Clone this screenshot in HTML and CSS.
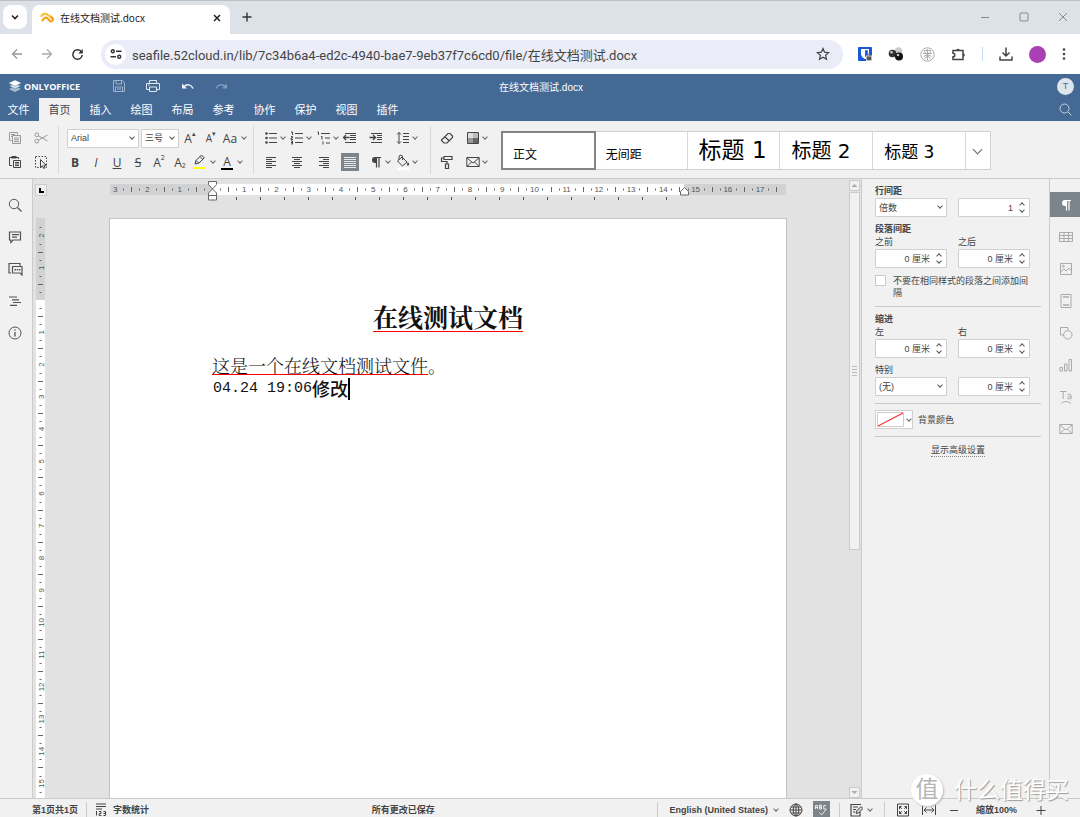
FILE: index.html
```html
<!DOCTYPE html>
<html lang="zh-CN">
<head>
<meta charset="utf-8">
<title>在线文档测试.docx</title>
<link rel="stylesheet" href="styles.css">
</head>
<body>
<div class="window">
  <div class="tabstrip">
    <button class="tab-search" aria-label="搜索标签页"><svg width="10" height="10" viewBox="0 0 10 10"><path d="M2 3.5l3 3 3-3" stroke="#222" stroke-width="1.6"/></svg></button>
    <div class="browser-tab">
      <svg width="14" height="12" viewBox="0 0 14 12"><path d="M1.500 4C3 1.500 5.500 1 8 3c1.500 1.500 2.500 1.500 3.500 1.500" stroke="#fcc13a" stroke-width="2.200" stroke-linecap="round"/><path d="M2.500 8.500C4.500 4.500 7 5 8.500 7.500c1 2 3 2.500 4 1s0-3-1.500-3.200" stroke="#f9a01b" stroke-width="2.200" stroke-linecap="round"/></svg>
      <span class="browser-tab-title">在线文档测试.docx</span>
      <button class="plain" aria-label="关闭标签页"><svg width="10" height="10" viewBox="0 0 10 10"><path d="M2 2l6 6M8 2l-6 6" stroke="#222" stroke-width="1.500"/></svg></button>
    </div>
    <button class="plain new-tab" aria-label="新标签页"><svg width="10" height="10" viewBox="0 0 10 10"><path d="M5 .5v9M.5 5h9" stroke="#333" stroke-width="1.400"/></svg></button>
    <div class="window-controls">
      <button class="plain" aria-label="最小化"><svg width="10" height="10" viewBox="0 0 10 10"><path d="M1 5.500h8" stroke="#888"/></svg></button>
      <button class="plain" aria-label="最大化"><svg width="10" height="10" viewBox="0 0 10 10"><rect x="1" y="1" width="8" height="8" rx="1" stroke="#888"/></svg></button>
      <button class="plain" aria-label="关闭"><svg width="10" height="10" viewBox="0 0 10 10"><path d="M1 1l8 8M9 1l-8 8" stroke="#888"/></svg></button>
    </div>
  </div>

  <div class="addressbar">
    <button class="plain nav" aria-label="后退"><svg width="12" height="12" viewBox="0 0 12 12"><path d="M11 6H1.500M6 1.500L1.500 6 6 10.500" stroke="#999" stroke-width="1.300"/></svg></button>
    <button class="plain nav" aria-label="前进"><svg width="12" height="12" viewBox="0 0 12 12"><path d="M1 6h9.500M6 1.500L10.500 6 6 10.500" stroke="#aaa" stroke-width="1.300"/></svg></button>
    <button class="plain nav" aria-label="刷新"><svg width="13" height="13" viewBox="0 0 13 13"><path d="M10.500 4A4.700 4.700 0 1 0 11.200 7" stroke="#333" stroke-width="1.500"/><path d="M11.800 1v4.500H7.300z" fill="#333"/></svg></button>
    <div class="omnibox">
      <span class="site-info"><svg width="12" height="12" viewBox="0 0 12 12"><g stroke="#333" stroke-width="1.400"><circle cx="2.800" cy="3.300" r="1.500"/><path d="M6 3.300h5.500M.5 8.700H6"/><circle cx="9.200" cy="8.700" r="1.500"/></g></svg></span>
      <input class="url" type="text" aria-label="地址" value="seafile.52cloud.in/lib/7c34b6a4-ed2c-4940-bae7-9eb37f7c6cd0/file/在线文档测试.docx">
      <button class="plain" aria-label="添加书签"><svg width="14" height="14" viewBox="0 0 14 14"><path d="M7 1.500l1.600 3.700 4 .4-3 2.700.9 4L7 10.200l-3.500 2.100.9-4-3-2.700 4-.4z" stroke="#444" stroke-width="1.200"/></svg></button>
    </div>
    <div class="extensions">
      <button class="plain" aria-label="Bitwarden"><svg width="14" height="14" viewBox="0 0 14 14"><rect width="14" height="14" rx="1" fill="#1859d8"/><path d="M3 2h8v5c0 3-4 5-4 5S3 10 3 7z" fill="#fff"/><path d="M7 3.200h2.800V7c0 1.600-2.800 3-2.800 3z" fill="#1859d8"/><rect x="8" y="8.500" width="6" height="5.500" fill="#dfe3ea"/><rect x="8.700" y="9.500" width="4.600" height="3.700" fill="#555"/><path d="M9.700 9.500V8.200a1.300 1.300 0 0 1 2.600 0v1.300" stroke="#666"/></svg></button>
      <button class="plain" aria-label="扩展"><svg width="16" height="14" viewBox="0 0 16 14"><circle cx="10.500" cy="4" r="3.800" fill="#ccc"/><circle cx="4.500" cy="6.500" r="3.800" fill="#333"/><circle cx="11" cy="9.500" r="4" fill="#111"/><circle cx="3.500" cy="5.300" r="1.300" fill="#ccc"/><circle cx="10" cy="8" r="1.300" fill="#ccc"/></svg></button>
      <button class="plain" aria-label="扩展"><svg width="15" height="15" viewBox="0 0 15 15"><g stroke="#aaa"><circle cx="7.500" cy="7.500" r="6.700"/><path d="M4 3.500h7M3 6.500h9M7.500 2v11M4 4.500l3.500 3 3.500-3M3.500 9.500l4-2 4 2M4.500 12l3-4 3 4"/></g></svg></button>
      <button class="plain" aria-label="扩展程序"><svg width="15" height="15" viewBox="0 0 15 15"><path d="M2 3.500h10v9H2v-2.700a1.800 1.800 0 0 0 0-3.600z" stroke="#444" stroke-width="1.500"/><path d="M5.200 3.500a1.800 1.800 0 0 1 3.600 0zM12 6.200a1.800 1.800 0 0 1 0 3.600z" fill="#444"/></svg></button>
      <span class="ext-divider"></span>
      <button class="plain" aria-label="下载"><svg width="14" height="14" viewBox="0 0 14 14"><path d="M7 .5v8.500M3.500 5.500L7 9l3.500-3.500M1 9.500v3.500h12V9.500" stroke="#444" stroke-width="1.500"/></svg></button>
      <button class="profile" aria-label="个人资料"></button>
      <button class="plain" aria-label="菜单"><svg width="4" height="14" viewBox="0 0 4 14"><g fill="#444"><circle cx="2" cy="2.500" r="1.300"/><circle cx="2" cy="7" r="1.300"/><circle cx="2" cy="11.500" r="1.300"/></g></svg></button>
    </div>
  </div>

  <header class="app-header">
    <div class="title-row">
      <div class="brand-area">
        <span class="brand"><svg width="14" height="14" viewBox="0 0 14 14"><path d="M7 7.500l6 2.600L7 13 1 10.100z" fill="#a9bdd3"/><path d="M7 4.500l6 2.600L7 10 1 7.100z" fill="#d5dfe9" stroke="#446995" stroke-width=".5"/><path d="M7 1l6.500 3L7 7.200.5 4z" fill="#fff" stroke="#446995" stroke-width=".4"/></svg>ONLYOFFICE</span>
        <div class="quick">
          <button class="plain" aria-label="保存"><svg width="12" height="12" viewBox="0 0 12 12"><path d="M.5.5h9l2 2v9H.5zM3 .5v3.500h5.500V.5M2.500 11.500V7h7v4.500M4 9h4" stroke="#9fb4cb"/></svg></button>
          <button class="plain" aria-label="打印"><svg width="14" height="12" viewBox="0 0 14 12"><path d="M3.500 3.500v-3h7v3M3.500 9.500h-3v-6h13v6h-3M3.500 7h7v4.500h-7zM2 5h1.500" stroke="#dfe7ef"/></svg></button>
          <button class="plain" aria-label="撤消"><svg width="13" height="12" viewBox="0 0 13 12"><path d="M3 6.500c3-3 7.500-2 9 2" stroke="#eef2f6" stroke-width="1.500"/><path d="M1 3.500v5h5z" fill="#eef2f6"/></svg></button>
          <button class="plain" aria-label="恢复"><svg width="13" height="12" viewBox="0 0 13 12"><path d="M10 6.500C7 3.500 2.500 4.500 1 8.500" stroke="#809dbd" stroke-width="1.500"/><path d="M12 3.500v5H7z" fill="#809dbd"/></svg></button>
        </div>
      </div>
      <span class="doc-title">在线文档测试.docx</span>
      <span class="avatar">T</span>
    </div>
    <nav class="menu-row">
      <button class="menu-tab first">文件</button><button class="menu-tab active">首页</button><button class="menu-tab">插入</button><button class="menu-tab">绘图</button><button class="menu-tab">布局</button><button class="menu-tab">参考</button><button class="menu-tab">协作</button><button class="menu-tab">保护</button><button class="menu-tab">视图</button><button class="menu-tab">插件</button>
      <button class="plain header-search" aria-label="搜索"><svg width="13" height="13" viewBox="0 0 13 13"><circle cx="5.500" cy="5.500" r="4.500" stroke="#c5d2df"/><path d="M9 9l3.500 3.500" stroke="#c5d2df"/></svg></button>
    </nav>
  </header>

  <div class="toolbar">
    <div class="group clip-group">
      <button class="tool" aria-label="复制"><svg width="14" height="14" viewBox="0 0 14 14"><path d="M3.500 9.500h-2v-8h8v2" stroke="#999"/><path d="M3 3.500h4M3 5.500h1" stroke="#999"/><path d="M4.500 4.500h8v8h-8zM6 7h5M6 8.800h5M6 10.600h5" stroke="#999"/></svg></button>
      <button class="tool" aria-label="剪切"><svg width="14" height="14" viewBox="0 0 14 14"><g stroke="#999"><circle cx="2.800" cy="3.800" r="1.900"/><circle cx="2.800" cy="10.200" r="1.900"/><path d="M4.500 4.800L13.500 10M4.500 9.200L13.500 4"/></g></svg></button>
      <button class="tool" aria-label="粘贴"><svg width="14" height="14" viewBox="0 0 14 14"><path d="M4 10.500H1.500v-8h9V4" stroke="#444"/><path d="M3.500 1h5v2.500h-5z" fill="#444"/><path d="M5.500 5.500h7v7h-7zM7 7.500h4M7 9h4M7 10.600h4" stroke="#444"/></svg></button>
      <button class="tool" aria-label="全选"><svg width="14" height="14" viewBox="0 0 14 14"><path d="M1.500 1.500h11v11h-11z" stroke="#444" stroke-dasharray="1.500 1.500"/><path d="M6.500 4.500v8l2-1.600 1.300 2.600 1.300-.6-1.200-2.600h2.400z" fill="#eee" stroke="#444"/></svg></button>
    </div>
    <div class="group font-group">
      <div class="tool-row">
        <span class="select font-name"><select aria-label="字体"><option>Arial</option></select></span>
        <span class="select font-size"><select aria-label="字号"><option>三号</option></select></span>
        <button class="tool glyph" aria-label="增大字号">A<sup>▴</sup></button>
        <button class="tool glyph small" aria-label="减小字号">A<sup>▾</sup></button>
        <button class="tool glyph wide" aria-label="更改大小写">Aa<i class="caret"></i></button>
      </div>
      <div class="tool-row">
        <button class="tool glyph bold">B</button>
        <button class="tool glyph italic">I</button>
        <button class="tool glyph under">U</button>
        <button class="tool glyph strike">S</button>
        <button class="tool glyph">A<sup>2</sup></button>
        <button class="tool glyph">A<sub>2</sub></button>
        <button class="tool wide" aria-label="突出显示颜色"><svg width="14" height="16" viewBox="0 0 14 16"><path d="M3 10l1-3.500L9.500 1l2.800 2.800L7 9l-4 1zM8 2.500l2.800 2.800M4 6.500L6.500 9" stroke="#444"/><path d="M1 13h12v2H1z" fill="#ff0"/></svg><i class="caret"></i></button>
        <button class="tool wide glyph" aria-label="字体颜色"><span class="font-color">A</span><i class="caret"></i></button>
      </div>
    </div>
    <div class="group para-group">
      <button class="tool" aria-label="项目符号"><svg width="14" height="14" viewBox="0 0 14 14"><path d="M5 2.500h8M5 7h8M5 11.500h8" stroke="#444"/><g fill="#444"><circle cx="2.500" cy="2.500" r="1.300"/><circle cx="2.500" cy="7" r="1.300"/><circle cx="2.500" cy="11.500" r="1.300"/></g></svg><i class="caret"></i></button>
      <button class="tool" aria-label="编号"><svg width="14" height="14" viewBox="0 0 14 14"><path d="M5 2.500h8M5 7h8M5 11.500h8M1 1h1.500v3M1 5.500h1.500V7H1v1.500h2M1 10h1.500v3H1M1 11.500h1.500" stroke="#444"/></svg><i class="caret"></i></button>
      <button class="tool" aria-label="多级列表"><svg width="14" height="14" viewBox="0 0 14 14"><path d="M4 2.500h9M8 7h5M9 12h4M.5 1h1v3M4 5.500h1v3M6 10.500v3" stroke="#444"/></svg><i class="caret"></i></button>
      <button class="tool" aria-label="减少缩进"><svg width="14" height="14" viewBox="0 0 14 14"><path d="M2 2.500h11M7 4.500h6M7 6.500h6M7 8.500h6M2 11.500h11" stroke="#444"/><path d="M.5 6.500h6M3 4L.5 6.500 3 9" stroke="#444" stroke-width="1.300"/></svg></button>
      <button class="tool" aria-label="增加缩进"><svg width="14" height="14" viewBox="0 0 14 14"><path d="M2 2.500h11M8 4.500h5M8 6.500h5M8 8.500h5M2 11.500h11" stroke="#444"/><path d="M.5 6.500h6M4 4l2.500 2.500L4 9" stroke="#444" stroke-width="1.300"/></svg></button>
      <button class="tool" aria-label="行间距"><svg width="14" height="14" viewBox="0 0 14 14"><path d="M7 2.500h6M7 5.500h6M7 8.500h6M7 11.500h6M3 1.500v11M1 3.500l2-2 2 2M1 10.500l2 2 2-2" stroke="#444"/></svg><i class="caret"></i></button>
      <button class="tool" aria-label="左对齐"><svg width="14" height="14" viewBox="0 0 14 14"><path d="M2 2.500h10M2 4.500h6M2 6.500h10M2 8.500h6M2 10.500h10M2 12.500h6" stroke="#444"/></svg></button>
      <button class="tool" aria-label="居中"><svg width="14" height="14" viewBox="0 0 14 14"><path d="M2 2.500h10M4 4.500h6M2 6.500h10M4 8.500h6M2 10.500h10M4 12.500h6" stroke="#444"/></svg></button>
      <button class="tool" aria-label="右对齐"><svg width="14" height="14" viewBox="0 0 14 14"><path d="M2 2.500h10M6 4.500h6M2 6.500h10M6 8.500h6M2 10.500h10M6 12.500h6" stroke="#444"/></svg></button>
      <button class="tool" aria-label="两端对齐" aria-pressed="true"><svg class="pressed" width="18" height="18" viewBox="0 0 18 18"><path d="M3 4.500h12M3 6.500h12M3 8.500h12M3 10.500h12M3 12.500h12M3 14.500h12" stroke="#e8ebed"/></svg></button>
      <button class="tool" aria-label="非打印字符"><svg width="14" height="14" viewBox="0 0 14 14"><path d="M7.500 2v10.500M10 2v10.500M5.500 2.500H12" stroke="#444" stroke-width="1.200"/><path d="M7.500 2H6a3 3 0 0 0 0 6h1.500z" fill="#444"/></svg><i class="caret"></i></button>
      <button class="tool" aria-label="底纹"><svg width="14" height="16" viewBox="0 0 14 16"><path d="M6 3l5 5-4.500 4L1.500 7zM3 6V3a1.800 1.800 0 0 1 3.600 0v3" stroke="#444"/><path d="M12 8c1.500 2 1.500 3.500 0 3.500S10.500 10 12 8z" fill="#444"/><path d="M1 13.500h12V16H1z" fill="#fff"/></svg><i class="caret"></i></button>
    </div>
    <div class="group misc-group">
      <button class="tool" aria-label="清除样式"><svg width="14" height="14" viewBox="0 0 14 14"><path d="M1.500 9L8 2.500h2l2.500 2.500v1.500L7 12H4L1.500 9.500zM4.700 5.800l4.500 4" stroke="#444" stroke-width="1.200"/></svg></button>
      <button class="tool" aria-label="配色方案"><svg width="14" height="14" viewBox="0 0 14 14"><path d="M1.500 1.500h11v11h-11z" fill="#ddd" stroke="#444"/><path d="M2 7h5v5H2z" fill="#999"/><path d="M7 2h5v5H7z" fill="#bbb"/><path d="M7 7h5v5H7z" fill="#666"/></svg><i class="caret"></i></button>
      <button class="tool" aria-label="复制样式"><svg width="14" height="14" viewBox="0 0 14 14"><path d="M4 1.500h8v3H4zM4 3H1.500v3.500H7V9M5.500 9h3v4.500h-3z" stroke="#444" stroke-width="1.200"/></svg></button>
      <button class="tool" aria-label="邮件合并"><svg width="14" height="14" viewBox="0 0 14 14"><path d="M.8 2.500h12.400v9H.8zM1 3l6 5 6-5M1 11.500l4.500-4.500M13 11.500L8.500 7" stroke="#444"/></svg><i class="caret"></i></button>
    </div>
    <div class="gallery">
      <button class="style selected">正文</button>
      <button class="style">无间距</button>
      <button class="style h1">标题 1</button>
      <button class="style h2">标题 2</button>
      <button class="style h3">标题 3</button>
      <button class="more" aria-label="更多样式"><i class="caret big"></i></button>
    </div>
  </div>

  <main class="body">
    <aside class="left-bar">
      <button class="plain" aria-label="查找"><svg width="14" height="14" viewBox="0 0 14 14"><circle cx="6" cy="6" r="4.700" stroke="#555"/><path d="M9.500 9.500l4 4" stroke="#555" stroke-width="1.300"/></svg></button>
      <button class="plain" aria-label="批注"><svg width="14" height="14" viewBox="0 0 14 14"><path d="M1.500 2h11v8H5L2.800 12.500V10H1.500zM4 4.700h7M4 7.200h5" stroke="#555" stroke-width="1.200"/></svg></button>
      <button class="plain" aria-label="聊天"><svg width="15" height="14" viewBox="0 0 15 14"><path d="M3 11H1V1.500h11V4M4.500 4.500h9.500v8.500l-2-2H4.500z" stroke="#555" stroke-width="1.200"/><path d="M6.500 7.800h6" stroke="#555" stroke-width="1.500" stroke-dasharray="1.500 .8"/></svg></button>
      <button class="plain" aria-label="导航"><svg width="14" height="14" viewBox="0 0 14 14"><path d="M1 3h8M4 5.800h7M5 8.500h8M2 11.300h7" stroke="#555" stroke-width="1.200"/></svg></button>
      <button class="plain" aria-label="关于"><svg width="14" height="14" viewBox="0 0 14 14"><circle cx="7" cy="7" r="6" stroke="#555"/><path d="M7 6v4.500M7 3.500v1.300" stroke="#555" stroke-width="1.300"/></svg></button>
    </aside>

    <section class="workspace">
      <div class="ruler-corner"><svg width="12" height="12" viewBox="0 0 12 12"><path d="M5 4v4h4" stroke="#000" stroke-width="2"/></svg></div>
      <div class="ruler-row"><svg class="h-ruler" id="h-ruler"></svg></div>
      <svg class="v-ruler" id="v-ruler"></svg>
      <div class="canvas">
        <article class="page">
          <h1><span class="misspelt">在线测试文档</span></h1>
          <p><span class="misspelt">这是一个在线文档测试文件</span>。</p>
          <p><span class="mono">04.24 19:06</span><span class="typed">修改</span><span class="cursor"></span></p>
        </article>
      </div>
      <div class="scrollbar">
        <span class="arrow"><svg width="9" height="9" viewBox="0 0 9 9"><path d="M1.500 6l3-3 3 3z" fill="#aaa"/></svg></span>
        <span class="thumb"></span>
        <span class="arrow down"><svg width="9" height="9" viewBox="0 0 9 9"><path d="M1.500 3l3 3 3-3z" fill="#aaa"/></svg></span>
      </div>
    </section>

    <aside class="settings">
      <label class="caption strong" for="line-rule">行间距</label>
      <div class="pair">
        <span class="select"><select id="line-rule"><option>倍数</option></select></span>
        <span class="spin"><input type="text" value="1" aria-label="行距值"><i></i></span>
      </div>
      <div class="caption strong gap-top">段落间距</div>
      <div class="pair">
        <label class="caption" for="before">之前</label><label class="caption" for="after">之后</label>
        <span class="spin"><input id="before" type="text" value="0 厘米"><i></i></span>
        <span class="spin"><input id="after" type="text" value="0 厘米"><i></i></span>
      </div>
      <label class="check"><input type="checkbox"><span>不要在相同样式的段落之间添加间隔</span></label>
      <hr>
      <div class="caption strong">缩进</div>
      <div class="pair">
        <label class="caption" for="left">左</label><label class="caption" for="right">右</label>
        <span class="spin"><input id="left" type="text" value="0 厘米"><i></i></span>
        <span class="spin"><input id="right" type="text" value="0 厘米"><i></i></span>
      </div>
      <label class="caption gap-top" for="special">特别</label>
      <div class="pair">
        <span class="select"><select id="special"><option>(无)</option></select></span>
        <span class="spin"><input type="text" value="0 厘米" aria-label="特别缩进值"><i></i></span>
      </div>
      <hr>
      <div class="bg-row">
        <button class="swatch" id="bg" aria-label="背景颜色"><svg width="27" height="15" viewBox="0 0 27 15"><path d="M.5.500h26v14H.5z" fill="#fff" stroke="#ccc"/><path d="M1 14L26 1" stroke="#f33" stroke-width="1.300"/></svg><i class="caret"></i></button>
        <label for="bg">背景颜色</label>
      </div>
      <hr>
      <a class="advanced" href="#">显示高级设置</a>
    </aside>

    <aside class="right-bar">
      <button class="plain active" aria-label="段落设置"><svg width="14" height="14" viewBox="0 0 14 14"><path d="M7.500 2v10.500M10 2v10.500M5.500 2.500H12" stroke="#fff" stroke-width="1.200"/><path d="M7.500 2H6a3 3 0 0 0 0 6h1.500z" fill="#fff"/></svg></button>
      <button class="plain" aria-label="表格设置"><svg width="14" height="14" viewBox="0 0 14 14"><path d="M.5 2.500h13v9H.5zM.5 5.500h13M.5 8.500h13M5 2.500v9M9.500 2.500v9" stroke="#aaa"/></svg></button>
      <button class="plain" aria-label="图片设置"><svg width="14" height="14" viewBox="0 0 14 14"><path d="M1.500 1.500h11v11h-11zM2 9.500L5 7l2 2 3-3 2.500 3" stroke="#aaa"/><circle cx="4.300" cy="4.300" r="1" stroke="#aaa"/></svg></button>
      <button class="plain" aria-label="页眉页脚"><svg width="14" height="14" viewBox="0 0 14 14"><path d="M2 .5h10v13H2z" stroke="#aaa"/><path d="M4 3h6M4 11h6" stroke="#aaa" stroke-width="1.500"/></svg></button>
      <button class="plain" aria-label="形状设置"><svg width="14" height="14" viewBox="0 0 14 14"><path d="M5 9H1.500V1.500H9V4" stroke="#aaa"/><circle cx="8.800" cy="8.800" r="4.200" stroke="#aaa"/></svg></button>
      <button class="plain" aria-label="图表设置"><svg width="14" height="14" viewBox="0 0 14 14"><path d="M1 9.500h2.500v3.500H1zM5.500 6H8v7H5.500zM10 1.500h2.500V13H10z" stroke="#aaa"/></svg></button>
      <button class="plain" aria-label="艺术字设置"><svg width="14" height="14" viewBox="0 0 14 14"><path d="M1 1.500h6.500M4.200 1.500V9M8.500 4.500c3-1 3.500 0 3.500 1.500V9M12 6.300c-4-.2-4.500 2.500-2 2.700 1.200 0 2-.8 2-1.500M2 13.500c3-2.500 7-2.500 10 0" stroke="#aaa"/></svg></button>
      <button class="plain" aria-label="邮件合并"><svg width="14" height="14" viewBox="0 0 14 14"><path d="M.8 2.500h12.400v9H.8zM1 3l6 5 6-5M1 11.500l4.500-4.500M13 11.500L8.500 7" stroke="#aaa"/></svg></button>
    </aside>
  </main>

  <footer class="status">
    <span class="pages">第1页共1页</span>
    <button class="plain count"><svg width="12" height="13" viewBox="0 0 12 13"><path d="M1 1h10M1 3.500h10M1 6h6" stroke="#444"/><path d="M1.500 8v4.500M4 8.500h2v2H4.200v2h2.300M8.500 8.500h2v4h-2M8.500 10.500h2" stroke="#444"/></svg>字数统计</button>
    <span class="saved">所有更改已保存</span>
    <button class="plain lang">English (United States)<i class="caret"></i></button>
    <button class="plain" aria-label="文档语言"><svg width="14" height="14" viewBox="0 0 14 14"><g stroke="#444"><circle cx="7" cy="7" r="6"/><ellipse cx="7" cy="7" rx="2.800" ry="6"/><path d="M7 1v12M1 7h12M2 4h10M2 10h10"/></g></svg></button>
    <button class="plain spell" aria-label="拼写检查"><svg width="14" height="14" viewBox="0 0 14 14"><path d="M1.500 6V2.500h2V6M1.500 4.500h2M5.500 2v4h2V4h-2 1.700V2zM12 2.500H9.800V6H12M5.500 9.500l2 2.500 5-6" stroke="#e8ebed"/></svg></button>
    <button class="plain track" aria-label="修订"><svg width="13" height="14" viewBox="0 0 13 14"><path d="M10 9v4H1V1.500h10M3 4h5M3 6.500h3M3 9h2" stroke="#444" stroke-width="1.200"/><path d="M6 10.500l.5-2.500L11 3.500l2 2L8.500 10z" fill="#ccc" stroke="#444"/></svg><i class="caret"></i></button>
    <div class="zoom">
      <button class="plain" aria-label="适合页面"><svg width="12" height="14" viewBox="0 0 12 14"><path d="M.5 1h11v12H.5z" stroke="#444"/><path d="M2.500 6V3.500H4.500M2.500 3.500l2.300 2.300M9.500 6V3.500H7.500M9.500 3.500L7.200 5.800M2.500 8v2.500H4.500M2.500 10.500l2.300-2.300M9.500 8v2.500H7.500M9.500 10.500L7.200 8.200" stroke="#444"/></svg></button>
      <button class="plain" aria-label="适合宽度"><svg width="14" height="12" viewBox="0 0 14 12"><path d="M.5 1v10M13.500 1v10M2 6h10M4.500 3.500L2 6l2.500 2.500M9.500 3.500L12 6 9.500 8.500" stroke="#444"/></svg></button>
      <button class="plain" aria-label="缩小"><svg width="10" height="10" viewBox="0 0 10 10"><path d="M1 5.500h8" stroke="#444"/></svg></button>
      <span class="zoom-value">縮放100%</span>
      <button class="plain" aria-label="放大"><svg width="10" height="10" viewBox="0 0 10 10"><path d="M.5 5.500h9M5 1v9" stroke="#444"/></svg></button>
    </div>
  </footer>
  <div class="watermark"><span class="seal">值</span>什么值得买</div>
</div>
<script src="rulers.js"></script>
</body>
</html>
```

FILE: styles.css
```css
*, *::before, *::after { box-sizing: border-box; }
body {
  margin: 0;
  font-family: "Liberation Sans", "Noto Sans CJK SC", sans-serif;
  font-size: 9px;
  color: #444;
}
svg { display: block; fill: none; flex: none; }
button, input, select { font: inherit; color: inherit; margin: 0; }
button { padding: 0; border: 0; background: none; }
.plain { display: flex; align-items: center; justify-content: center; }
.window { display: flex; flex-direction: column; height: 100vh; position: relative; overflow: hidden; background: #fff; }

/* browser frame */
.tabstrip { display: flex; align-items: flex-start; height: 34px; padding: 4px 12px 0 3px; background: #dde1e8; border-top: 1px solid #bfc0c3; }
.tab-search { display: grid; place-items: center; width: 24px; height: 24px; border-radius: 8px; background: #fff; }
.browser-tab { display: flex; align-items: center; gap: 6px; width: 198px; height: 29px; margin-left: 5px; padding: 0 8px 4px; border-radius: 8px 8px 0 0; background: #fff; color: #222; font-size: 10px; font-family: "Noto Sans", "Noto Sans CJK SC", sans-serif; }
.browser-tab-title { flex: 1; }
.new-tab { width: 34px; height: 24px; }
.window-controls { display: flex; gap: 29px; margin-left: auto; padding-top: 7px; }
.addressbar { display: flex; align-items: center; height: 40px; padding-left: 2px; }
.nav { width: 30px; height: 28px; }
.omnibox { flex: 1; display: flex; align-items: center; gap: 6px; height: 29px; margin-left: 9px; padding: 0 13px 0 4px; border-radius: 15px; background: #eaedf7; }
.site-info { display: grid; place-items: center; width: 21px; height: 21px; border-radius: 50%; background: #fff; }
.url { flex: 1; min-width: 0; padding: 0; border: 0; background: none; outline: 0; color: #444; font-family: Roboto, "Noto Sans CJK SC", sans-serif; font-size: 13px; }
.extensions { display: flex; align-items: center; gap: 16px; padding: 0 14px 0 15px; }
.ext-divider { width: 1px; height: 14px; background: #c3dafa; }
.profile { width: 17px; height: 17px; border-radius: 50%; background: #a940b4; }

/* application header */
.app-header { background: #446995; color: #fff; }
.title-row { display: grid; grid-template-columns: 1fr auto 1fr; align-items: center; height: 24px; padding: 0 6px 0 8px; }
.brand-area { display: flex; align-items: center; }
.brand { display: flex; align-items: center; gap: 2px; width: 105px; font: bold 9px "Open Sans", sans-serif; }
.quick { display: flex; gap: 21px; }
.doc-title { font-size: 10px; }
.avatar { justify-self: end; width: 17px; height: 17px; border-radius: 50%; background: #dfe5ec; color: #446995; line-height: 17px; text-align: center; }
.menu-row { display: flex; height: 23px; padding-right: 8px; }
.menu-tab { width: 41px; font-size: 11px; line-height: 22px; }
.menu-tab.first { width: 39px; padding-right: 2px; }
.menu-tab.active { background: #f1f1f1; color: #444; }
.header-search { margin-left: auto; }

/* toolbar */
.toolbar { display: flex; height: 58px; padding: 5px 0 4px; border-bottom: 1px solid #cbcbcb; background: #f1f1f1; }
.group { display: grid; grid-template-rows: 24px 24px; border-right: 1px solid #d8d8d8; }
.clip-group { grid-template-columns: 26px 26px; padding: 0 4px 0 2px; }
.clip-group .tool { justify-content: center; }
.font-group { padding: 0 4px 0 6px; }
.para-group { grid-template-columns: repeat(6, 1fr); width: 177px; padding: 0 8px 0 10px; }
.misc-group { grid-template-columns: 26px 26px; padding: 0 9px; border: 0; }
.tool-row { display: flex; align-items: center; gap: 1px; }
.tool { display: flex; align-items: center; gap: 1px; height: 22px; align-self: center; }
.tool-row .tool { width: 20px; justify-content: center; }
.tool-row .wide { width: 27px; gap: 3px; }
.font-name { width: 72px; margin: 0 1px 0 2px; }
.font-size { width: 38px; }
.glyph { font-family: "Open Sans", sans-serif; font-size: 12px; }
.glyph.small { font-size: 10px; }
.glyph sup, .glyph sub { font-size: 7px; line-height: 7px; }
.glyph sup { align-self: flex-start; padding-top: 3px; }
.glyph sub { align-self: flex-end; padding-bottom: 4px; }
.tool.glyph:has(sup), .tool.glyph:has(sub) { gap: 0; }
.bold { font-weight: bold; }
.italic { font-style: italic; }
.under { text-decoration: underline; }
.strike { text-decoration: line-through; }
.font-color { border-bottom: 2px solid #000; padding: 0 2px; line-height: 13px; }
.pressed { background: #7d858c; margin-left: -2px; }
.caret { width: 4px; height: 4px; margin: -2px 2px 0; border: solid #666; border-width: 0 1px 1px 0; transform: rotate(45deg); flex: none; }
.caret.big { width: 7px; height: 7px; }
.gallery { display: flex; align-self: center; height: 39px; width: 490px; border: 1px solid #d0d0d0; background: #fff; }
.style { flex: 1; padding: 9px 11px 0; border-right: 1px solid #d8d8d8; color: #000; text-align: left; white-space: nowrap; font-size: 12px; line-height: 20px; }
.style.selected { outline: 2px solid #848484; outline-offset: -1px; }
.style.h1, .style.h2, .style.h3 { font-family: "DejaVu Sans", "Noto Sans CJK SC", sans-serif; }
.style.h1 { font-size: 23px; padding-top: 0; }
.style.h2 { font-size: 20px; padding-top: 2px; }
.style.h3 { font-size: 17px; padding-top: 4px; }
.more { display: grid; place-items: center; width: 24px; }

/* drop-downs and spinners */
.select, .spin { position: relative; display: block; height: 19px; border: 1px solid #cfcfcf; border-radius: 1px; background: #fff; }
.select select { appearance: none; width: 100%; height: 100%; padding: 0 3px; border: 0; background: none; line-height: 16px; }
.select::after { content: ""; position: absolute; right: 4px; top: 5px; width: 4px; height: 4px; border: solid #555; border-width: 0 1px 1px 0; transform: rotate(45deg); }
.spin input { width: 100%; height: 100%; padding: 0 16px 0 3px; border: 0; background: none; text-align: right; }
.spin i::before, .spin i::after { content: ""; position: absolute; right: 5px; width: 4px; height: 4px; border: solid #555; }
.spin i::before { top: 4px; border-width: 1px 0 0 1px; transform: rotate(45deg); }
.spin i::after { bottom: 4px; border-width: 0 1px 1px 0; transform: rotate(45deg); }

/* editor */
.body { flex: 1; min-height: 0; display: grid; grid-template-columns: 33px 1fr 188px 31px; background: #f1f1f1; }
.left-bar, .right-bar { display: flex; flex-direction: column; gap: 7px; }
.left-bar { padding-top: 13px; border-right: 1px solid #cbcbcb; }
.right-bar { padding-top: 13px; border-left: 1px solid #cbcbcb; }
.left-bar button, .right-bar button { height: 25px; }
.left-bar button { padding-right: 2px; }
.right-bar button { padding-left: 2px; }
.right-bar .active { background: #7d858c; }
.workspace { display: grid; grid-template: 39px 1fr / 14px 1fr 12px; min-width: 0; min-height: 0; background: #e2e2e2; }
.ruler-corner { width: 12px; height: 12px; margin: 5px 0 0 2px; outline: 1px solid #ccc; outline-offset: -1px; background: #eee; }
.ruler-row { display: flex; justify-content: center; padding-top: 2px; }
.h-ruler { width: 678px; height: 24px; overflow: visible; }
.v-ruler { grid-area: 2 / 1; width: 12px; height: 100%; overflow: hidden; margin-left: 2px; }
.ruler-text { font: 8px "Liberation Sans", sans-serif; fill: #555; text-anchor: middle; }
.canvas { grid-area: 2 / 2; display: flex; justify-content: center; overflow: hidden; }
.page { flex: 0 0 678px; padding: 85px 102px 0; border: 1px solid #c4c4c4; border-bottom: 0; background: #fff; color: #111; }
.page h1 { margin: 0 0 24px; text-align: center; font: bold 25px/25px "Noto Serif CJK SC", "Noto Sans CJK SC", serif; }
.page p { display: flex; align-items: flex-start; margin: 0; height: 22px; font: 300 18px/18px "Noto Serif CJK SC", "Noto Sans CJK SC", serif; }
.misspelt { display: inline-block; border-bottom: 1px solid #f00; }
.page h1 .misspelt { padding-bottom: 2px; }
.page .mono { padding-left: 1px; font: 15px/22px "Liberation Mono", monospace; }
.page .typed { font: 500 18px/20px "Noto Sans CJK SC", sans-serif; }
.cursor { width: 2px; height: 22px; background: #000; }
.scrollbar { grid-area: 1 / 3 / 3 / 4; display: flex; flex-direction: column; padding: 1px 1px 0 0; gap: 1px; }
.arrow { display: grid; place-items: center; height: 11px; border: 1px solid #cbcbcb; background: #f1f1f1; }
.arrow.down { margin-top: auto; }
.thumb { height: 58%; border: 1px solid #cbcbcb; background: repeating-linear-gradient(#bbb 0 1px, transparent 1px 3px) center / 5px 10px no-repeat, #f1f1f1; }

/* paragraph settings */
.settings { display: flex; flex-direction: column; padding: 6px 8px 0 13px; border-left: 1px solid #cbcbcb; line-height: 12px; }
.caption { display: block; height: 12px; margin-bottom: 1px; }
.strong { font-weight: bold; }
.gap-top { margin-top: 6px; }
.pair { display: grid; grid-template-columns: 72px 72px; column-gap: 11px; }
.check { display: flex; gap: 7px; margin-top: 7px; padding-right: 6px; }
.check input { appearance: none; flex: none; width: 11px; height: 11px; margin: 0; border: 1px solid #ccc; background: #fff; }
.settings hr { width: 100%; height: 1px; margin: 7px 0 6px; border: 0; background: #cbcbcb; }
.bg-row { display: flex; align-items: center; gap: 5px; }
.swatch { display: flex; align-items: center; gap: 1px; width: 38px; height: 19px; padding-left: 1px; border: 1px solid #cfcfcf; background: #fff; }
.advanced { align-self: center; margin-top: 1px; color: #444; text-decoration: none; border-bottom: 1px dotted #888; }

/* status bar */
.status { display: flex; align-items: center; height: 19px; padding: 3px 34px 0 32px; border-top: 1px solid #cbcbcb; background: #f1f1f1; font-weight: bold; line-height: 16px; }
.pages { width: 54px; }
.count { gap: 6px; padding-left: 8px; border-left: 1px solid #cbcbcb; }
.saved { flex: 1; text-align: center; }
.lang { gap: 4px; margin-right: 9px; padding-left: 11px; border-left: 1px solid #cbcbcb; }
.spell { width: 17px; height: 17px; margin-left: 10px; background: #7d858c; }
.track { gap: 3px; margin-left: 9px; padding: 0 5px 0 10px; border-left: 1px solid #cbcbcb; }
.zoom { display: flex; align-items: center; gap: 13px; margin-left: 5px; padding-left: 12px; border-left: 1px solid #cbcbcb; }
.zoom-value { padding: 0 6px 0 4px; }
.watermark { position: absolute; right: 11px; bottom: 11px; display: flex; align-items: center; gap: 11px; height: 32px; color: #fff; font-size: 23px; line-height: 30px; text-shadow: 1px 1px 1px #999; }
.seal { width: 32px; height: 32px; border-radius: 50%; background: #fff; box-shadow: 1px 1px 2px #bbb; color: #b5b5b5; text-align: center; text-shadow: none; }
```

FILE: rulers.js
```js
const NS = "http://www.w3.org/2000/svg";
const CM = 32.24;

function add(svg, tag, attrs, text) {
  const el = document.createElementNS(NS, tag);
  for (const key in attrs) el.setAttribute(key, attrs[key]);
  if (text !== undefined) el.textContent = text;
  svg.appendChild(el);
}

function scale(svg, vertical, start, origin, end, length) {
  const box = (from, to, fill) => add(svg, "rect", vertical
    ? { x: 1, y: from, width: 9, height: to - from, fill }
    : { x: from, y: 3, width: to - from, height: 11, fill });
  box(start, length, "#d2d2d2");
  box(origin, end, "#fff");
  for (let q = Math.ceil((start - origin) / CM * 4); origin + q * CM / 4 < length - 3; q++) {
    const at = origin + q * CM / 4;
    if (q === 0 || at < start + 2) continue;
    if (q % 4 === 0) {
      if (vertical && at > length - 8) continue;
      const pos = vertical ? { transform: `translate(8.500 ${at}) rotate(-90)` } : { x: at, y: 11 };
      add(svg, "text", { class: "ruler-text", ...pos }, Math.abs(q / 4));
    } else {
      const size = q % 2 === 0 ? 5 : 2;
      add(svg, "rect", vertical
        ? { x: 5.5 - size / 2, y: Math.round(at), width: size, height: 1, fill: "#666" }
        : { x: Math.round(at), y: 8.5 - size / 2, width: 1, height: size, fill: "#666" });
    }
  }
}

const h = document.getElementById("h-ruler");
scale(h, false, 1, 103, 575, 677);
for (let i = 1; i < 20; i++) {
  add(h, "rect", { x: Math.round(103 + i * 23.9), y: 16, width: 1, height: 3, fill: "#555" });
}
const marker = { fill: "#fff", stroke: "#666" };
add(h, "path", { d: "M99.5 .5h8v3l-4 4.500-4-4.500z", ...marker });
add(h, "path", { d: "M103.500 8l4 4v7h-8v-7zM99.500 14.500h8", ...marker });
add(h, "path", { d: "M575.500 6.500l4 4v3.500h-8v-3.500z", ...marker });

const v = document.getElementById("v-ruler");
const height = v.getBoundingClientRect().height;
scale(v, true, 0, 82, height, height);
```
